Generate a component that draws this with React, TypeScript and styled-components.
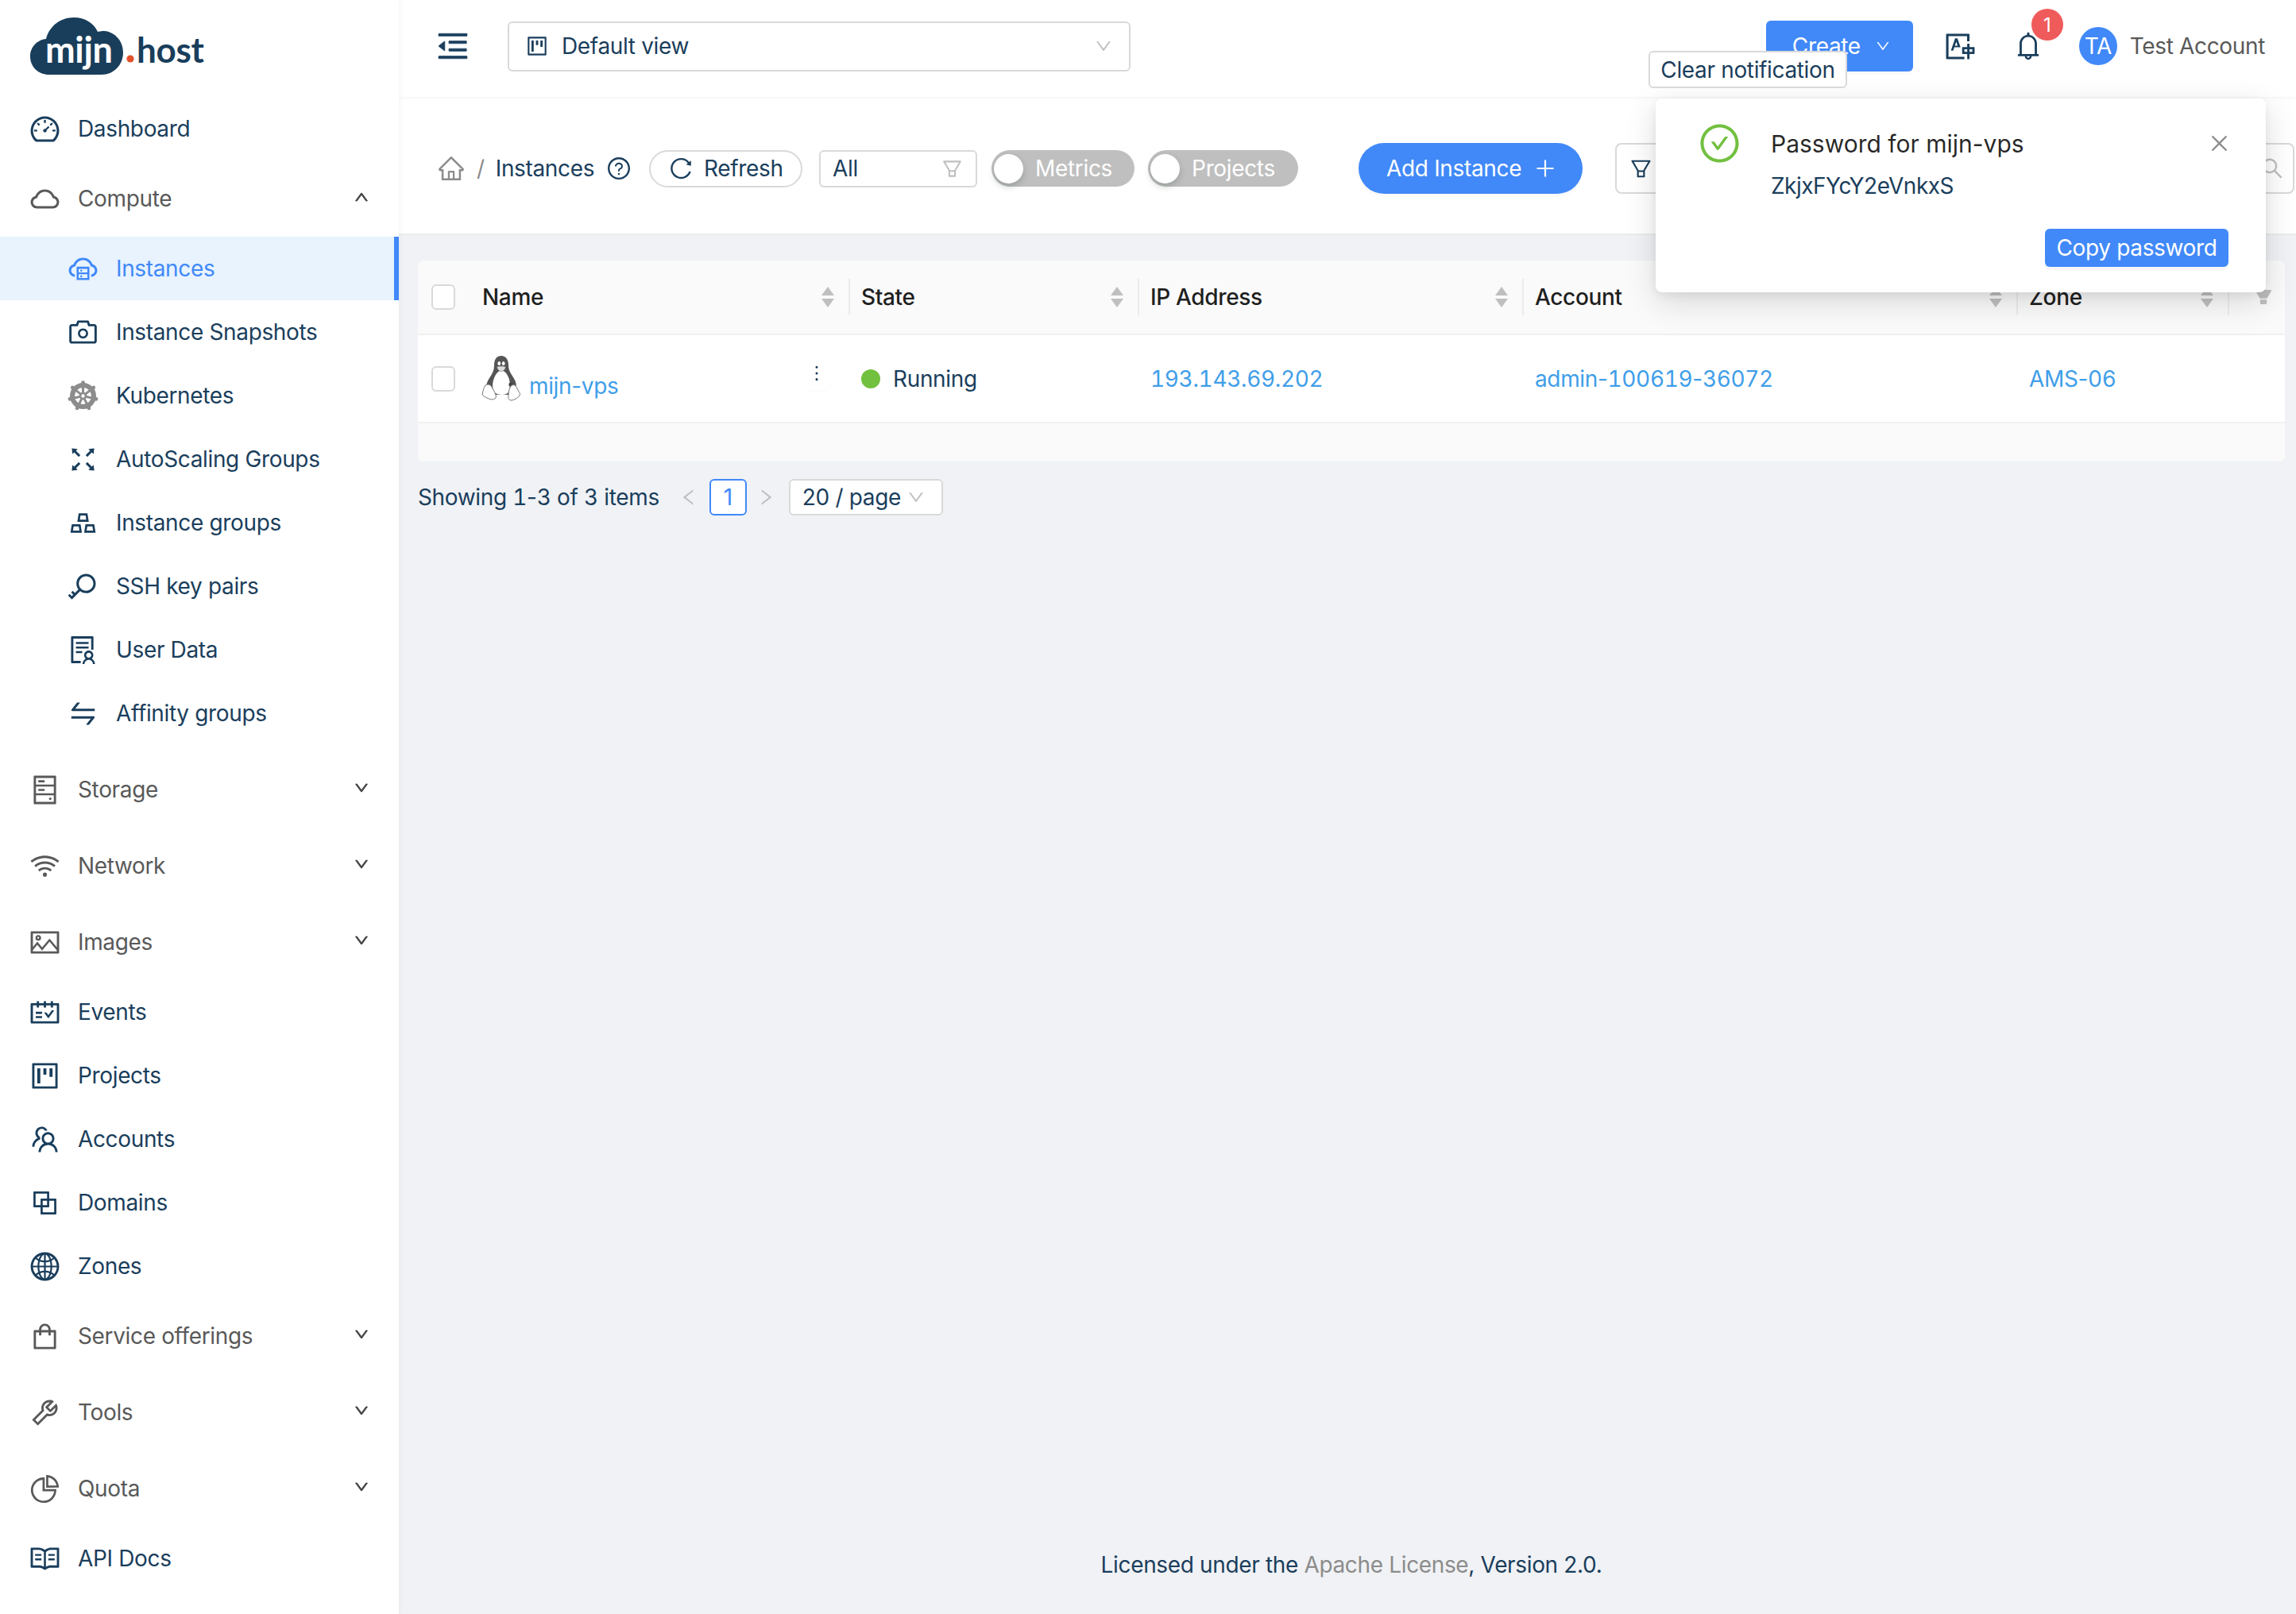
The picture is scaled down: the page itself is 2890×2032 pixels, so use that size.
import React from "react";
import styled, { createGlobalStyle } from "styled-components";
import {
  AiOutlineDashboard, AiOutlineCloud, AiOutlineCloudServer, AiOutlineCamera, AiOutlineFullscreen,
  AiOutlineGold, AiOutlineKey, AiOutlineSolution, AiOutlineSwap, AiOutlineHdd, AiOutlineWifi,
  AiOutlinePicture, AiOutlineSchedule, AiOutlineProject, AiOutlineTeam, AiOutlineBlock, AiOutlineGlobal,
  AiOutlineShopping, AiOutlineTool, AiOutlinePieChart, AiOutlineRead, AiOutlineMenuFold, AiOutlineDown,
  AiOutlineUp, AiOutlineHome, AiOutlineQuestionCircle, AiOutlineReload, AiOutlineFilter, AiOutlinePlus,
  AiOutlineSearch, AiOutlineTranslation, AiOutlineBell, AiOutlineCheckCircle, AiOutlineClose,
  AiOutlineMore, AiOutlineLeft, AiOutlineRight, AiFillFilter,
} from "react-icons/ai";

const navy = "#1a3e5c";
const blue = "#4189f8";
const link = "#3f9ee9";

const Global = createGlobalStyle`
  html, body { margin: 0; padding: 0; background: #f0f2f5; }
  body {
    font-family: Inter, "Noto Sans", sans-serif;
    font-size: 28px;
    letter-spacing: -0.35px;
    color: ${navy};
    overflow: hidden;
  }
`;

// digits are tabular in the reference, hyphens are not
const Num = styled.span`
  font-feature-settings: "tnum";
`;

const Page = styled.div`
  position: relative;
  display: flex;
  width: 2890px;
  height: 2032px;
  overflow: hidden;
`;

/* ---- sidebar ---- */
const Sidebar = styled.aside`
  width: 502px;
  flex: none;
  background: #fff;
  box-shadow: 2px 0 6px rgba(0, 21, 41, 0.035);
  position: relative;
  z-index: 2;
`;
const LogoBox = styled.div`
  height: 122px;
  padding: 22px 0 0 38px;
  box-sizing: border-box;
`;
const Menu = styled.nav`
  display: flex;
  flex-direction: column;
`;
const Item = styled.div<{ $sub?: boolean; $active?: boolean; $group?: boolean }>`
  height: 80px;
  display: flex;
  align-items: center;
  box-sizing: border-box;
  padding-left: ${(p) => (p.$sub ? "86px" : "38px")};
  padding-right: 37px;
  color: ${(p) => (p.$active ? blue : p.$group ? "#595959" : navy)};
  background: ${(p) => (p.$active ? "#e8f3fe" : "transparent")};
  border-right: ${(p) => (p.$active ? `6px solid ${blue}` : "none")};
`;
const Group = styled.div`
  margin: 8px 0;
`;
const SubList = styled.div`
  margin-top: 8px;
`;
const MenuIcon = styled.span`
  width: 36px;
  height: 41px;
  flex: none;
  display: flex;
  align-items: center;
  justify-content: center;
  margin-right: 24px;
  svg { width: 41px; height: 41px; flex: none; }
`;
const MenuArrow = styled.span`
  margin-left: auto;
  display: flex;
  margin-top: -4px;
  color: #444;
  svg { width: 20px; height: 20px; stroke: currentColor; stroke-width: 50; }
`;

/* ---- header ---- */
const Main = styled.main`
  flex: 1;
  min-width: 0;
  display: flex;
  flex-direction: column;
`;
const Header = styled.header`
  height: 122px;
  flex: none;
  background: #fff;
  display: flex;
  align-items: center;
  box-sizing: border-box;
  padding: 0 39px 6px 45px;
  box-shadow: 0 2px 4px rgba(0, 21, 41, 0.04);
  position: relative;
  z-index: 1;
`;
const Fold = styled.span`
  display: flex;
  svg { width: 46px; height: 46px; stroke: currentColor; stroke-width: 14; }
`;
const ViewSelect = styled.div`
  width: 784px;
  height: 63px;
  margin-left: 46px;
  box-sizing: border-box;
  border: 2px solid #d9d9d9;
  border-radius: 6px;
  display: flex;
  align-items: center;
  padding: 0 20px 0 20px;
  svg.kanban { width: 30px; height: 30px; margin-right: 16px; }
`;
const Chevron = styled.span`
  margin-left: auto;
  display: flex;
  color: #bfbfbf;
  svg { width: 24px; height: 24px; }
`;
const HeaderRight = styled.div`
  margin-left: auto;
  display: flex;
  align-items: center;
`;
const CreateButton = styled.div`
  width: 185px;
  height: 64px;
  background: ${blue};
  color: #fff;
  border-radius: 6px;
  display: flex;
  align-items: center;
  box-sizing: border-box;
  padding: 0 28px 0 33px;
  box-shadow: 0 4px 0 rgba(0, 0, 0, 0.02);
  svg { width: 20px; height: 20px; margin-left: auto; }
`;
const TranslateIcon = styled.span`
  width: 36px;
  margin-left: 42px;
  display: flex;
  justify-content: center;
  svg { width: 41px; height: 41px; flex: none; }
`;
const BellWrap = styled.span`
  position: relative;
  width: 30px;
  margin-left: 52px;
  display: flex;
  justify-content: center;
  svg { width: 40px; height: 40px; flex: none; }
`;
const Badge = styled.span`
  position: absolute;
  left: 19px;
  top: -27px;
  width: 40px;
  height: 40px;
  border-radius: 50%;
  background: #ef5b5b;
  color: #fff;
  font-size: 24px;
  display: flex;
  align-items: center;
  justify-content: center;
`;
const Avatar = styled.span`
  width: 48px;
  height: 48px;
  margin-left: 49px;
  border-radius: 50%;
  background: ${blue};
  color: #fff;
  font-size: 28px;
  letter-spacing: -0.5px;
  display: flex;
  align-items: center;
  justify-content: center;
`;
const UserName = styled.span`
  margin-left: 16px;
  color: #595959;
`;

/* ---- breadcrumb / toolbar ---- */
const Toolbar = styled.div`
  height: 174px;
  flex: none;
  box-sizing: border-box;
  background: #fff;
  border-bottom: 2px solid #ebebeb;
  display: flex;
  align-items: center;
  padding: 8px 2px 0 48px;
`;
const HomeIcon = styled.span`
  display: flex;
  color: #8c8c8c;
  svg { width: 36px; height: 36px; }
`;
const Slash = styled.span`
  color: #8c8c8c;
  margin: 0 14px 0 14px;
`;
const HelpIcon = styled.span`
  display: flex;
  margin-left: 15px;
  svg { width: 32px; height: 32px; }
`;
const RefreshButton = styled.div`
  width: 193px;
  height: 47px;
  margin-left: 22px;
  box-sizing: border-box;
  border: 2px solid #d9d9d9;
  border-radius: 24px;
  display: flex;
  align-items: center;
  padding-left: 22px;
  gap: 13px;
  svg { width: 32px; height: 32px; }
`;
const FilterSelect = styled.div`
  width: 199px;
  height: 47px;
  margin-left: 21px;
  box-sizing: border-box;
  border: 2px solid #d9d9d9;
  border-radius: 6px;
  display: flex;
  align-items: center;
  justify-content: space-between;
  padding: 0 15px;
  svg { width: 29px; height: 29px; color: #bfbfbf; }
`;
const Switch = styled.div<{ $width: number; $gap: number }>`
  width: ${(p) => p.$width}px;
  height: 46px;
  margin-left: ${(p) => p.$gap}px;
  box-sizing: border-box;
  border-radius: 23px;
  background: #bfbfbf;
  color: #fff;
  display: flex;
  align-items: center;
  padding-left: 3px;
  gap: 15px;
  &::before {
    content: "";
    width: 37px;
    height: 37px;
    border-radius: 50%;
    background: #fff;
    box-shadow: 0 4px 8px rgba(0, 35, 11, 0.2);
  }
`;
const AddButton = styled.div`
  width: 282px;
  height: 64px;
  margin-left: 76px;
  box-sizing: border-box;
  border-radius: 32px;
  background: ${blue};
  color: #fff;
  display: flex;
  align-items: center;
  padding-left: 35px;
  gap: 15px;
  box-shadow: 0 4px 0 rgba(0, 0, 0, 0.02);
  svg { width: 30px; height: 30px; }
`;
const SearchBox = styled.div`
  margin-left: auto;
  width: 855px;
  height: 64px;
  box-sizing: border-box;
  border: 2px solid #d9d9d9;
  border-radius: 8px;
  display: flex;
  align-items: center;
  justify-content: space-between;
  padding: 0 10px 0 15px;
  svg.funnel { width: 31px; height: 31px; }
  svg.lens { width: 32px; height: 32px; color: #bfbfbf; }
`;

/* ---- table ---- */
const Content = styled.div`
  padding: 32px 14px 0 24px;
`;
const columns = "64px 478px 364px 484px 622px 266px 72px";
const Table = styled.div`
  background: #fff;
  border-radius: 8px;
  overflow: hidden;
`;
const HeadRow = styled.div`
  display: grid;
  grid-template-columns: ${columns};
  height: 94px;
  box-sizing: border-box;
  align-items: center;
  background: #fafafa;
  border-bottom: 2px solid #f0f0f0;
  color: #1f1f1f;
  font-weight: 500;
`;
const BodyRow = styled.div`
  display: grid;
  grid-template-columns: ${columns};
  height: 111px;
  box-sizing: border-box;
  align-items: center;
  background: #fff;
  border-bottom: 2px solid #f0f0f0;
`;
const TableFoot = styled.div`
  height: 48px;
  background: #fafafa;
`;
const CheckCell = styled.div`
  padding-left: 17px;
`;
const Check = styled.span`
  display: block;
  width: 30px;
  height: 32px;
  box-sizing: border-box;
  border: 2px solid #d9d9d9;
  border-radius: 6px;
  background: #fff;
`;
const HeadCell = styled.div<{ $first?: boolean }>`
  height: 46px;
  display: flex;
  align-items: center;
  justify-content: space-between;
  box-sizing: border-box;
  padding: 0 18px 0 ${(p) => (p.$first ? "17px" : "14px")};
  border-left: ${(p) => (p.$first ? "none" : "2px solid #ececec")};
`;
const PinCell = styled(HeadCell)`
  justify-content: flex-end;
  color: #bfbfbf;
  padding-right: 14px;
  svg { width: 26px; height: 26px; }
`;
const NameCell = styled.div`
  display: flex;
  align-items: center;
  padding: 0 18px 0 17px;
`;
const LinkText = styled.span`
  color: ${link};
`;
const VpsLink = styled(LinkText)`
  margin: 18px 0 0 11px;
`;
const MoreButton = styled.span`
  margin: 0 0 14px auto;
  width: 44px;
  height: 44px;
  border-radius: 50%;
  display: flex;
  align-items: center;
  justify-content: center;
  box-shadow: 0 2px 2px rgba(0, 0, 0, 0.02);
  svg { width: 28px; height: 28px; }
`;
const TextCell = styled.div`
  display: flex;
  align-items: center;
  padding-left: 16px;
`;
const StatusDot = styled.span`
  width: 24px;
  height: 24px;
  border-radius: 50%;
  background: #72c040;
  margin-right: 16px;
`;

/* ---- pagination ---- */
const Pager = styled.div`
  margin-top: 22px;
  height: 46px;
  display: flex;
  align-items: center;
  white-space: pre;
`;
const Arrow = styled.span<{ $gap: number }>`
  width: 15px;
  margin-left: ${(p) => p.$gap}px;
  display: flex;
  justify-content: center;
  color: #bfbfbf;
  svg { width: 26px; height: 26px; flex: none; }
`;
const PageNo = styled.span`
  width: 47px;
  height: 46px;
  margin-left: 18px;
  box-sizing: border-box;
  border: 2px solid ${blue};
  border-radius: 6px;
  color: ${blue};
  background: #fff;
  display: flex;
  align-items: center;
  justify-content: center;
`;
const PageSize = styled.div`
  width: 194px;
  height: 46px;
  margin-left: 21px;
  box-sizing: border-box;
  border: 2px solid #d9d9d9;
  border-radius: 6px;
  background: #fff;
  display: flex;
  align-items: center;
  padding: 0 20px 0 15px;
`;
const ShowingText = styled.span`
  display: block;
`;
const Footer = styled.footer`
  margin-top: auto;
  padding: 0 0 45px 10px;
  text-align: center;
  line-height: 34px;
`;
const Muted = styled.span`
  color: #8c8c8c;
`;

/* ---- overlay ---- */
const ClearTip = styled.div`
  position: absolute;
  left: 2075px;
  top: 64px;
  z-index: 6;
  width: 250px;
  height: 47px;
  box-sizing: border-box;
  border: 2px solid #d9d9d9;
  border-radius: 6px;
  background: #fff;
  display: flex;
  align-items: center;
  justify-content: center;
  white-space: nowrap;
`;
const Notice = styled.div`
  position: absolute;
  left: 2084px;
  top: 124px;
  z-index: 5;
  width: 768px;
  height: 244px;
  box-sizing: border-box;
  background: #fff;
  border-radius: 8px;
  box-shadow: 0 12px 40px rgba(0, 0, 0, 0.14), 0 4px 12px rgba(0, 0, 0, 0.06);
  padding: 32px 47px 0 56px;
  display: flex;
`;
const NoticeCheck = styled.span`
  width: 48px;
  height: 48px;
  flex: none;
  margin-right: 41px;
  display: flex;
  align-items: center;
  justify-content: center;
  color: #72c040;
  svg { width: 55px; height: 55px; flex: none; }
`;
const NoticeBody = styled.div`
  flex: 1;
  display: flex;
  flex-direction: column;
`;
const NoticeTitle = styled.div`
  font-size: 30px;
  letter-spacing: 0;
  line-height: 50px;
  color: rgba(0, 0, 0, 0.85);
`;
const NoticeText = styled.div`
  margin-top: 10px;
  line-height: 36px;
  letter-spacing: -0.5px;
`;
const CopyButton = styled.div`
  align-self: flex-end;
  width: 231px;
  height: 48px;
  margin-top: 36px;
  border-radius: 6px;
  background: ${blue};
  color: #fff;
  display: flex;
  align-items: center;
  justify-content: center;
  box-shadow: 0 4px 0 rgba(0, 0, 0, 0.03);
`;
const NoticeClose = styled.span`
  position: absolute;
  top: 42px;
  right: 44px;
  display: flex;
  color: #8c8c8c;
  svg { width: 29px; height: 29px; }
`;

const Logo = () => (
  <svg width="222" height="72" viewBox="0 0 222 72">
    <path
      d="M24 72C10 72 0 62 0 49C0 37 9 28 20 27C24 11 38 0 55 0C69 0 80 7 85 18C89 17 91 17 93 17C107 18 117 30 117 44C117 60 105 72 90 72Z"
      fill="#193e5b"
    />
    <text x="19" y="57" fontFamily="Lato, sans-serif" fontWeight="700" fontSize="45" fill="#fff">mijn</text>
    <circle cx="126" cy="52" r="4.6" fill="#e4512b" />
    <text x="134" y="57" fontFamily="Lato, sans-serif" fontWeight="700" fontSize="44" fill="#193e5b">host</text>
  </svg>
);

const K8sIcon = () => {
  const spokes = [0, 1, 2, 3, 4, 5, 6].map((i) => (i * 360) / 7);
  return (
    <svg viewBox="0 0 41 41" fill="none" style={{ color: "#8c8c8c" }}>
      <circle cx="20.5" cy="20.5" r="13.5" stroke="currentColor" strokeWidth="6" />
      <circle cx="20.5" cy="20.5" r="3.5" stroke="currentColor" strokeWidth="2.6" />
      {spokes.map((a) => (
        <g key={a} transform={`rotate(${a} 20.5 20.5)`}>
          <line x1="20.5" y1="17" x2="20.5" y2="8" stroke="currentColor" strokeWidth="3" />
          <circle cx="20.5" cy="3.6" r="2.4" fill="currentColor" />
        </g>
      ))}
    </svg>
  );
};

const Tux = () => (
  <svg width="48" height="57" viewBox="0 0 48 57">
    <path
      d="M24 0C17 0 15 6 15 12C15 18 13 22 9 28C5 34 4 40 7 44L14 49H34L41 44C44 38 43 33 39 27C35 21 33 17 33 12C33 5 30 0 24 0Z"
      fill="#555"
    />
    <path
      d="M24 18C19 20 17 23 15 28C12 35 13 41 15 46C20 50 30 50 33 46C36 38 35 30 32 25C30 21 28 19 24 18Z"
      fill="#fff"
    />
    <ellipse cx="21.3" cy="9.5" rx="1.9" ry="2.5" fill="#fff" />
    <ellipse cx="26.7" cy="9.5" rx="1.9" ry="2.5" fill="#fff" />
    <path d="M18.5 14C21 12.6 27 12.6 29.5 14C28.5 18 26 19.5 24 19.5C22 19.5 19.5 18 18.5 14Z" fill="#ddd" stroke="#777" strokeWidth="0.7" />
    <circle cx="36" cy="36" r="2.6" fill="#444" />
    <path
      d="M4 37C8 35 11 36 13 41C16 46 18 50 17 53C14 56 10 55 6 53C3 51 0 51 0.5 47C1 43 2 40 4 37Z"
      fill="#fff"
      stroke="#666"
      strokeWidth="0.9"
    />
    <path
      d="M36 38C40 35 42 37 44 41C46 46 48 47 47.5 49C46 52 42 55 37 56C34 56 32 54 33 50C33 45 34 41 36 38Z"
      fill="#fff"
      stroke="#666"
      strokeWidth="0.9"
    />
  </svg>
);

const Sort = () => (
  <svg width="16" height="26" viewBox="0 0 16 26" fill="#bfbfbf">
    <path d="M8 0L16 11H0Z" />
    <path d="M0 15H16L8 26Z" />
  </svg>
);

type Entry = { label: string; icon: React.ReactNode };
const computeItems: Entry[] = [
  { label: "Instance Snapshots", icon: <AiOutlineCamera /> },
  { label: "Kubernetes", icon: <K8sIcon /> },
  { label: "AutoScaling Groups", icon: <AiOutlineFullscreen /> },
  { label: "Instance groups", icon: <AiOutlineGold /> },
  { label: "SSH key pairs", icon: <AiOutlineKey /> },
  { label: "User Data", icon: <AiOutlineSolution /> },
  { label: "Affinity groups", icon: <AiOutlineSwap /> },
];
const groupsA: Entry[] = [
  { label: "Storage", icon: <AiOutlineHdd /> },
  { label: "Network", icon: <AiOutlineWifi /> },
  { label: "Images", icon: <AiOutlinePicture /> },
];
const plainItems: Entry[] = [
  { label: "Events", icon: <AiOutlineSchedule /> },
  { label: "Projects", icon: <AiOutlineProject /> },
  { label: "Accounts", icon: <AiOutlineTeam /> },
  { label: "Domains", icon: <AiOutlineBlock /> },
  { label: "Zones", icon: <AiOutlineGlobal /> },
];
const groupsB: Entry[] = [
  { label: "Service offerings", icon: <AiOutlineShopping /> },
  { label: "Tools", icon: <AiOutlineTool /> },
  { label: "Quota", icon: <AiOutlinePieChart /> },
];
const headers = ["State", "IP Address", "Account", "Zone"];

const ClosedGroup = ({ label, icon }: Entry) => (
  <Group>
    <Item $group>
      <MenuIcon>{icon}</MenuIcon>
      {label}
      <MenuArrow><AiOutlineDown /></MenuArrow>
    </Item>
  </Group>
);

export default function App() {
  return (
    <Page>
      <Global />
      <Sidebar>
        <LogoBox><Logo /></LogoBox>
        <Menu>
          <Item>
            <MenuIcon><AiOutlineDashboard /></MenuIcon>
            Dashboard
          </Item>
          <Group>
            <Item $group>
              <MenuIcon><AiOutlineCloud /></MenuIcon>
              Compute
              <MenuArrow><AiOutlineUp /></MenuArrow>
            </Item>
            <SubList>
              <Item $sub $active>
                <MenuIcon><AiOutlineCloudServer /></MenuIcon>
                Instances
              </Item>
              {computeItems.map((it) => (
                <Item $sub key={it.label}>
                  <MenuIcon>{it.icon}</MenuIcon>
                  {it.label}
                </Item>
              ))}
            </SubList>
          </Group>
          {groupsA.map((g) => <ClosedGroup key={g.label} {...g} />)}
          {plainItems.map((it) => (
            <Item key={it.label}>
              <MenuIcon>{it.icon}</MenuIcon>
              {it.label}
            </Item>
          ))}
          {groupsB.map((g) => <ClosedGroup key={g.label} {...g} />)}
          <Item>
            <MenuIcon><AiOutlineRead /></MenuIcon>
            API Docs
          </Item>
        </Menu>
      </Sidebar>

      <Main>
        <Header>
          <Fold><AiOutlineMenuFold /></Fold>
          <ViewSelect>
            <AiOutlineProject className="kanban" />
            Default view
            <Chevron><AiOutlineDown /></Chevron>
          </ViewSelect>
          <HeaderRight>
            <CreateButton>Create<AiOutlineDown /></CreateButton>
            <TranslateIcon><AiOutlineTranslation /></TranslateIcon>
            <BellWrap>
              <AiOutlineBell />
              <Badge>1</Badge>
            </BellWrap>
            <Avatar>TA</Avatar>
            <UserName>Test Account</UserName>
          </HeaderRight>
        </Header>

        <Toolbar>
          <HomeIcon><AiOutlineHome /></HomeIcon>
          <Slash>/</Slash>
          Instances
          <HelpIcon><AiOutlineQuestionCircle /></HelpIcon>
          <RefreshButton><AiOutlineReload />Refresh</RefreshButton>
          <FilterSelect>All<AiOutlineFilter /></FilterSelect>
          <Switch $width={180} $gap={18}>Metrics</Switch>
          <Switch $width={189} $gap={17}>Projects</Switch>
          <AddButton>Add Instance<AiOutlinePlus /></AddButton>
          <SearchBox>
            <AiOutlineFilter className="funnel" />
            <AiOutlineSearch className="lens" />
          </SearchBox>
        </Toolbar>

        <Content>
          <Table>
            <HeadRow>
              <CheckCell><Check /></CheckCell>
              <HeadCell $first>Name<Sort /></HeadCell>
              {headers.map((h) => (
                <HeadCell key={h}>{h}<Sort /></HeadCell>
              ))}
              <PinCell><AiFillFilter /></PinCell>
            </HeadRow>
            <BodyRow>
              <CheckCell><Check /></CheckCell>
              <NameCell>
                <Tux />
                <VpsLink>mijn-vps</VpsLink>
                <MoreButton><AiOutlineMore /></MoreButton>
              </NameCell>
              <TextCell><StatusDot />Running</TextCell>
              <TextCell><LinkText><Num>193.143.69.202</Num></LinkText></TextCell>
              <TextCell><LinkText>admin-<Num>100619</Num>-<Num>36072</Num></LinkText></TextCell>
              <TextCell><LinkText>AMS-<Num>06</Num></LinkText></TextCell>
            </BodyRow>
            <TableFoot />
          </Table>
          <Pager>
            <ShowingText>Showing <Num>1</Num>-<Num>3</Num> of <Num>3</Num> items</ShowingText>
            <Arrow $gap={30}><AiOutlineLeft /></Arrow>
            <PageNo>1</PageNo>
            <Arrow $gap={17}><AiOutlineRight /></Arrow>
            <PageSize>20 / page<Chevron><AiOutlineDown /></Chevron></PageSize>
          </Pager>
        </Content>

        <Footer>
          Licensed under the <Muted>Apache License</Muted>, Version 2.0.
        </Footer>
      </Main>

      <ClearTip>Clear notification</ClearTip>
      <Notice>
        <NoticeCheck><AiOutlineCheckCircle /></NoticeCheck>
        <NoticeBody>
          <NoticeTitle>Password for mijn-vps</NoticeTitle>
          <NoticeText>ZkjxFYcY2eVnkxS</NoticeText>
          <CopyButton>Copy password</CopyButton>
        </NoticeBody>
        <NoticeClose><AiOutlineClose /></NoticeClose>
      </Notice>
    </Page>
  );
}
